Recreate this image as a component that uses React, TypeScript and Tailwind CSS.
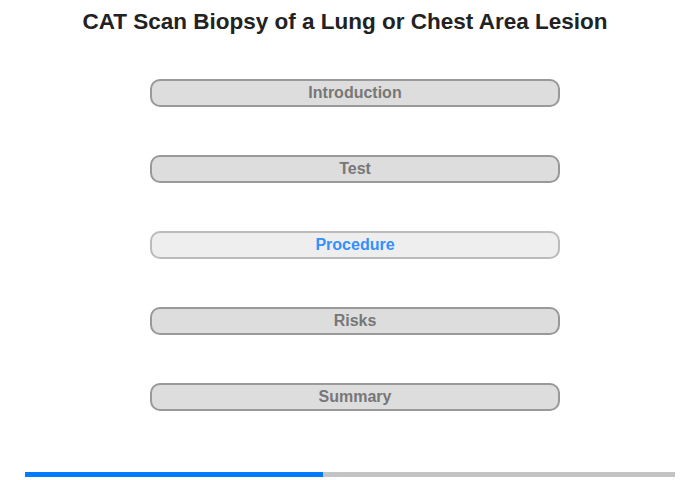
import React from "react";

const items = ["Introduction", "Test", "Procedure", "Risks", "Summary"];

export default function App() {
  return (
    <div className="w-[700px] h-[480px] bg-white flex flex-col" style={{ fontFamily: '"Liberation Sans", Arial, sans-serif' }}>
      <div className="pt-[9px] w-[690px] text-center text-[22.5px] leading-[26px] font-bold text-[#222222]">
        CAT Scan Biopsy of a Lung or Chest Area Lesion
      </div>
      <div className="mt-[44px] ml-[150px] w-[410px] flex flex-col gap-[48px]">
        {items.map((t) =>
          t === "Procedure" ? (
            <div key={t} className="h-[28px] rounded-[10px] border-2 border-[#bbbbbb] bg-[#eeeeee] flex items-center justify-center text-[16px] font-bold text-[#3390ff]">
              {t}
            </div>
          ) : (
            <div key={t} className="h-[28px] rounded-[10px] border-2 border-[#999999] bg-[#dddddd] flex items-center justify-center text-[16px] font-bold text-[#777777]">
              {t}
            </div>
          )
        )}
      </div>
      <div className="mt-[61px] ml-[25px] w-[650px] h-[5px] bg-[#c4c4c4] flex">
        <div className="w-[298px] h-full bg-[#007bff]" />
      </div>
    </div>
  );
}
